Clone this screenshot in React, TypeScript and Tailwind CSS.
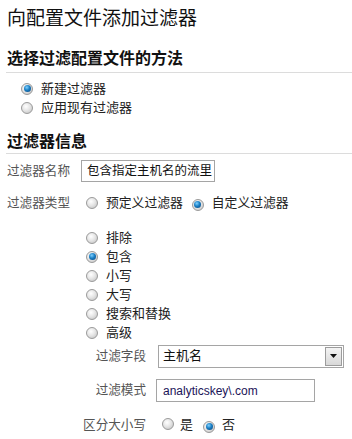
const font = { fontFamily: '"Liberation Sans", "Noto Sans CJK SC", sans-serif' };

function Radio({ checked = false }: { checked?: boolean }) {
  return (
    <span className="relative inline-flex w-[12px] h-[12px] shrink-0 items-center justify-center rounded-full border border-[#9a9a9a] bg-[radial-gradient(circle_at_40%_35%,#ffffff_0%,#e6e6e6_45%,#bdbdbd_100%)]">
      {checked && (
        <span className="w-[7px] h-[7px] rounded-full bg-[radial-gradient(circle_at_40%_35%,#7fd0ff_0%,#1a7fc4_45%,#0b3f75_100%)]" />
      )}
    </span>
  );
}

function RadioRow({ label, checked = false }: { label: string; checked?: boolean }) {
  return (
    <div className="h-[19px] flex items-center gap-[8px]">
      <Radio checked={checked} />
      <span className="text-[13px] leading-[19px] text-[#222]">{label}</span>
    </div>
  );
}

export default function App() {
  return (
    <div className="w-[352px] h-[439px] bg-white overflow-hidden text-[#222]" style={font}>
      {/* Title */}
      <div className="h-[37px] flex items-center pl-[7px]">
        <h1 className="text-[19px] leading-[19px] font-normal text-[#111]">向配置文件添加过滤器</h1>
      </div>

      {/* Method */}
      <div className="h-[36px] ml-[6px] flex items-end pl-[1px] pb-[5px] border-b border-[#dcdcdc]">
        <h2 className="text-[16px] leading-[16px] font-bold text-[#111]">选择过滤配置文件的方法</h2>
      </div>
      <div className="pt-[6px] pl-[21px]">
        <RadioRow label="新建过滤器" checked />
        <RadioRow label="应用现有过滤器" />
      </div>

      {/* Filter info */}
      <div className="h-[37px] ml-[6px] flex items-end pl-[1px] pb-[3px] border-b border-[#dcdcdc]">
        <h2 className="text-[16px] leading-[16px] font-bold text-[#111]">过滤器信息</h2>
      </div>

      <div className="h-[34px] flex items-center">
        <span className="w-[81px] pl-[7px] text-[12.6px] text-[#555]">过滤器名称</span>
        <div className="w-[134px] h-[22px] border border-[#a5a5a5] pl-[5px] flex items-center overflow-hidden whitespace-nowrap text-[12.5px] text-[#111]">
          包含指定主机名的流里
        </div>
      </div>

      <div className="h-[30px] flex items-center">
        <span className="w-[86px] pl-[7px] text-[12.6px] text-[#555]">过滤器类型</span>
        <Radio />
        <span className="ml-[8px] text-[12.8px] text-[#222]">预定义过滤器</span>
        <span className="ml-[9px]">
          <Radio checked />
        </span>
        <span className="ml-[8px] text-[12.8px] text-[#222]">自定义过滤器</span>
      </div>

      <div className="pt-[10px] pl-[86px]">
        <RadioRow label="排除" />
        <RadioRow label="包含" checked />
        <RadioRow label="小写" />
        <RadioRow label="大写" />
        <RadioRow label="搜索和替换" />
        <RadioRow label="高级" />
      </div>

      <div className="h-[28px] flex items-center">
        <span className="w-[146px] text-right text-[12.6px] text-[#555]">过滤字段</span>
        <div className="ml-[12px] w-[186px] h-[23px] border border-[#a5a5a5] flex items-center">
          <span className="flex-1 pl-[4px] text-[13px] text-[#111]">主机名</span>
          <span className="w-[17px] h-[19px] mr-[1px] border border-[#9c9c9c] bg-[linear-gradient(#f4f4f4,#d8d8d8)] flex items-center justify-center">
            <svg width="7" height="4" viewBox="0 0 7 4">
              <path d="M0 0h7L3.5 4z" fill="#111" />
            </svg>
          </span>
        </div>
      </div>

      <div className="h-[41px] flex items-center">
        <span className="w-[146px] text-right text-[12.6px] text-[#555]">过滤模式</span>
        <div className="ml-[10px] w-[159px] h-[23px] border border-[#a5a5a5] pl-[6px] flex items-center text-[12px] text-[#1b1458]">
          analyticskey\.com
        </div>
      </div>

      <div className="h-[28px] flex items-center">
        <span className="w-[146px] text-right text-[12.6px] text-[#555]">区分大小写</span>
        <span className="ml-[16px]">
          <Radio />
        </span>
        <span className="ml-[6px] text-[13px] text-[#222]">是</span>
        <span className="ml-[10px]">
          <Radio checked />
        </span>
        <span className="ml-[7px] text-[13px] text-[#222]">否</span>
      </div>
    </div>
  );
}
